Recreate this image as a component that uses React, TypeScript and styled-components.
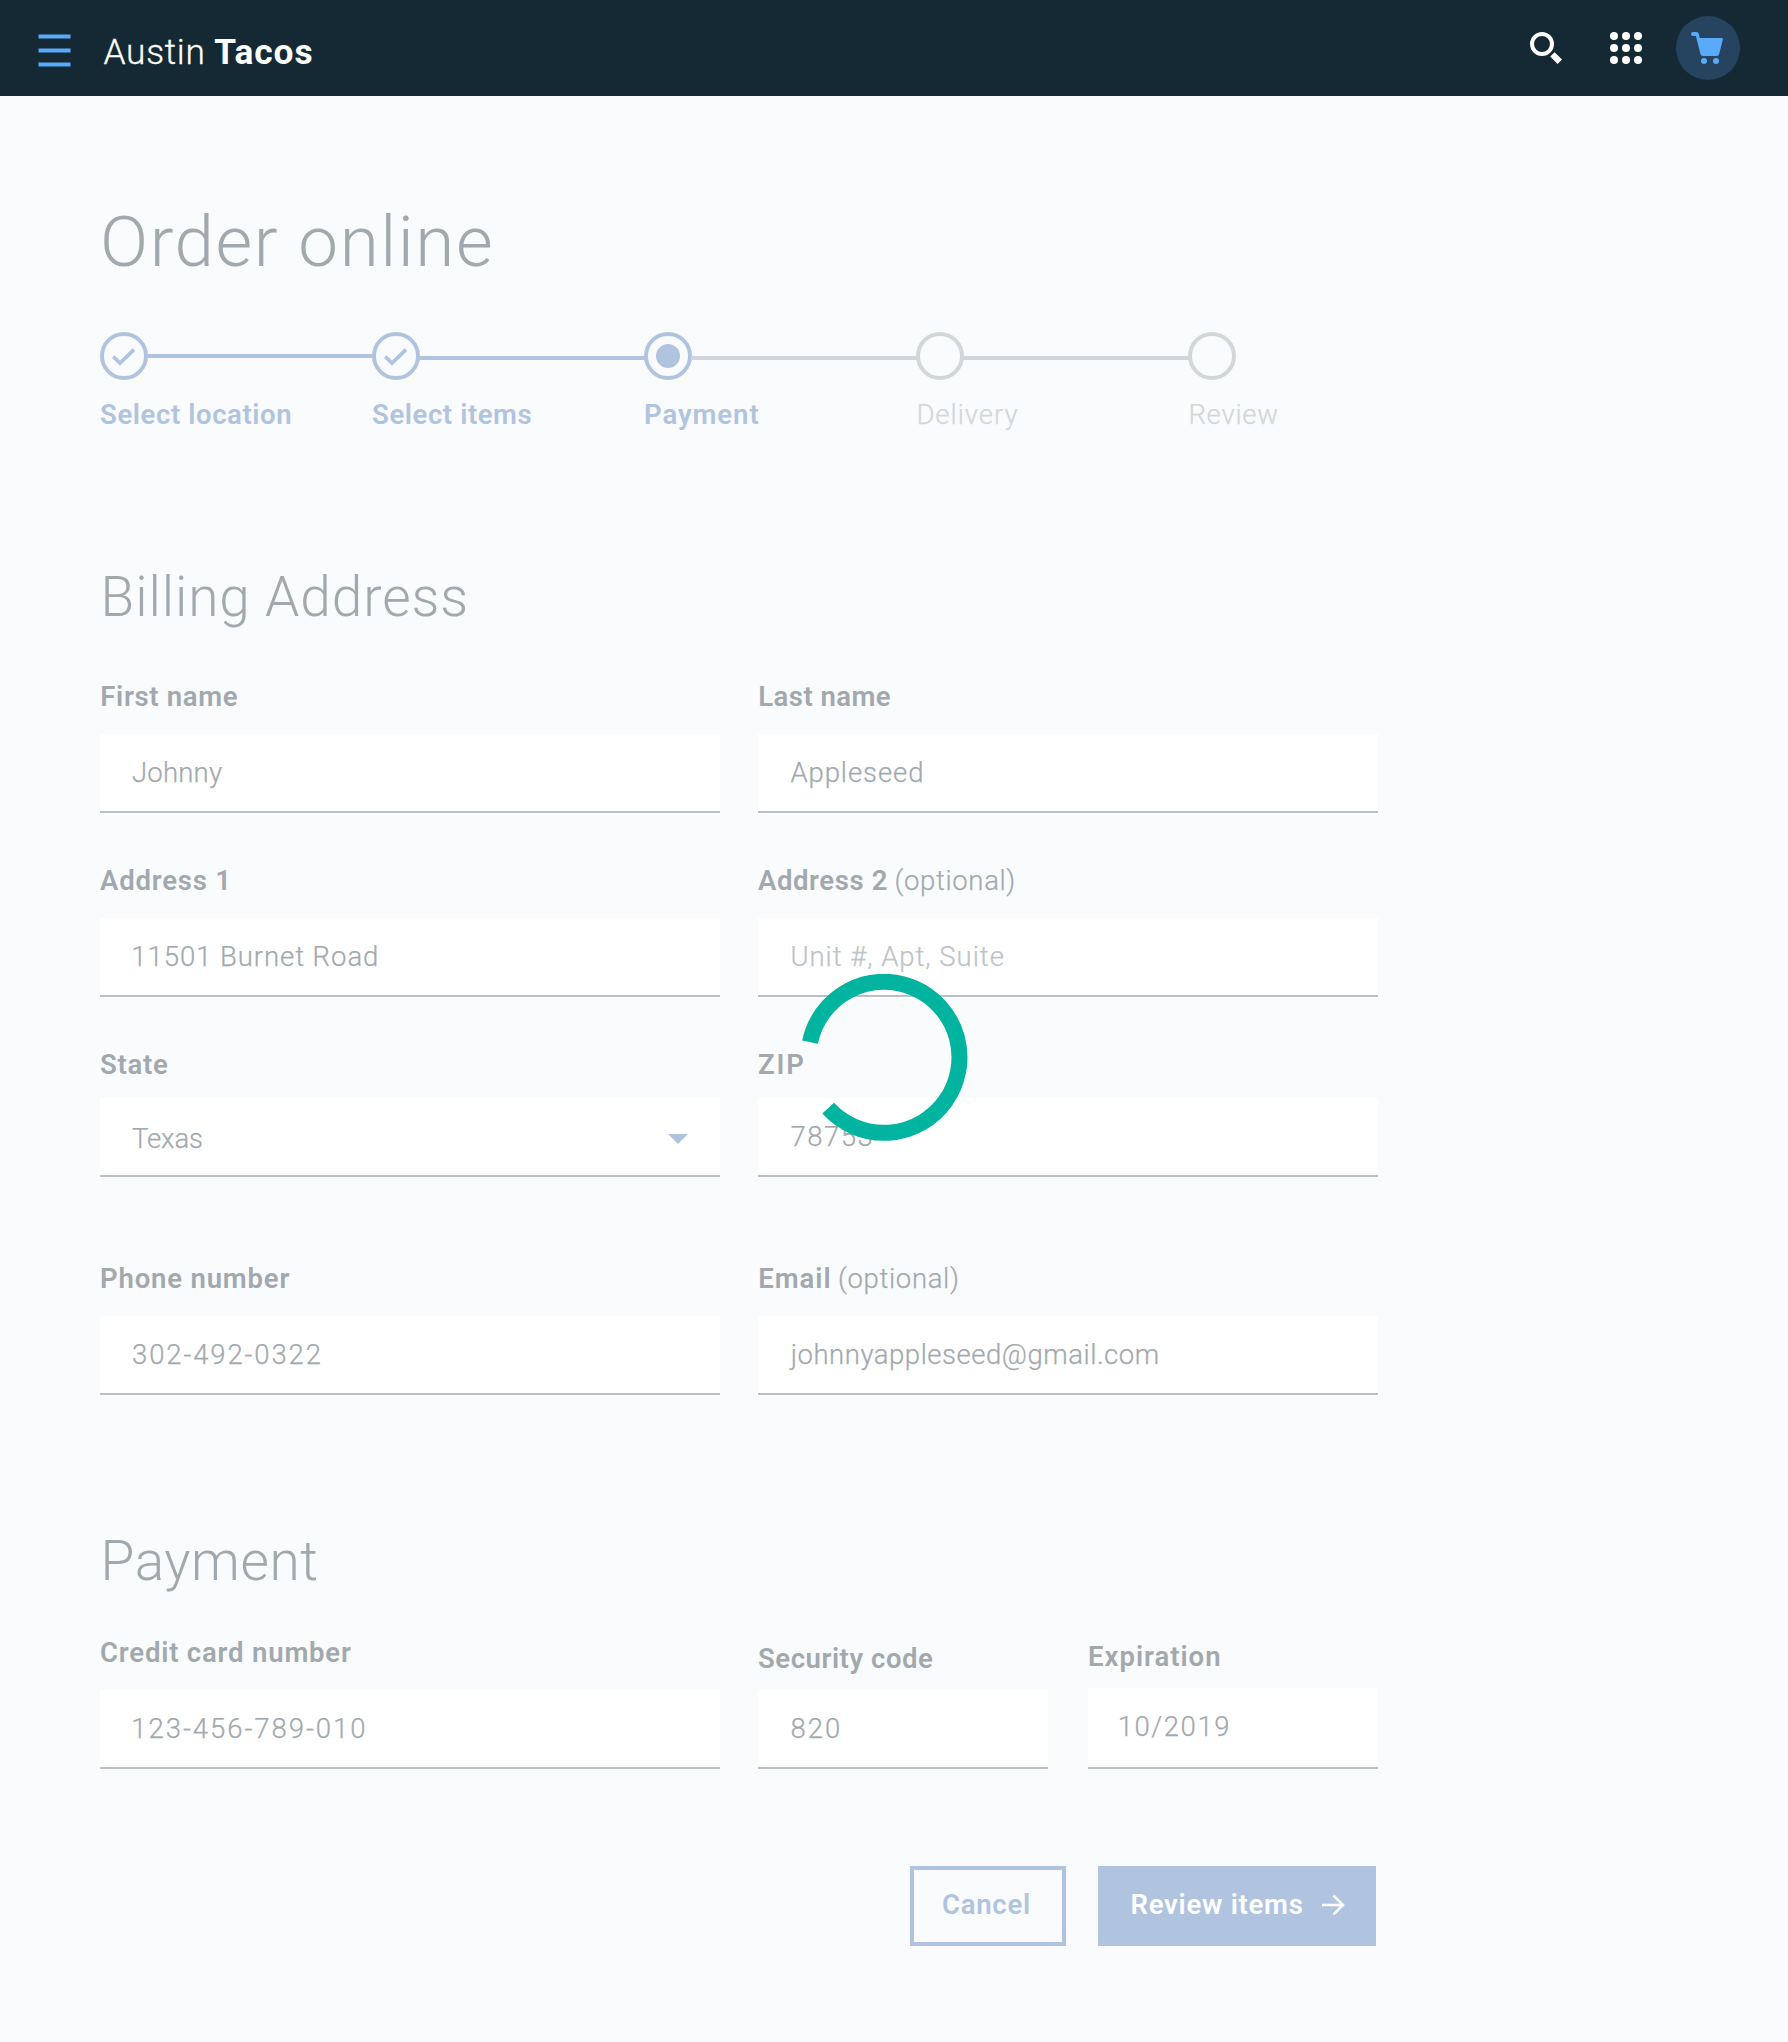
import React from "react";
import styled, { createGlobalStyle } from "styled-components";

const color = {
  header: "#152934",
  page: "#fafbfd",
  ink: "#a1a9ae",
  muted: "#bdc3c7",
  faint: "#d1d7db",
  blue: "#b0c4e0",
  bright: "#5aaafa",
  teal: "#00b4a0",
  rule: "#b9c0c5",
};

const GlobalStyle = createGlobalStyle`
  *, *::before, *::after { box-sizing: border-box; }
  body {
    margin: 0;
    background: ${color.page};
    color: ${color.ink};
    font-family: Roboto, "Noto Sans", "Liberation Sans", sans-serif;
    font-size: 27.5px;
    font-weight: 300;
    line-height: 35px;
  }
  h1, h2 { margin: 0; font-weight: 300; }
`;

const Page = styled.div`
  position: relative;
  min-height: 2042px;
`;

const Header = styled.header`
  display: flex;
  align-items: center;
  height: 96px;
  padding: 0 48px 0 38px;
  background: ${color.header};
`;

const Burger = styled.svg`
  display: block;
  width: 34px;
  height: 34px;
  margin-top: 5px;
`;

const Brand = styled.div`
  display: flex;
  gap: 8.6px;
  flex: 1;
  margin: 8px 0 0 31.5px;
  color: #fff;
  font-size: 35.3px;
  line-height: 42px;
  letter-spacing: 0.71px;

  span { -webkit-text-stroke: 0.3px; }
  strong { font-weight: 700; letter-spacing: 0.95px; }
`;

const Actions = styled.nav`
  display: flex;
  align-items: center;

  svg { display: block; }
`;

const SearchSlot = styled.div`
  width: 80px;
`;

const AppsSlot = styled.div`
  width: 66px;
`;

const CartBadge = styled.div`
  display: flex;
  align-items: center;
  justify-content: center;
  width: 64px;
  height: 64px;
  border-radius: 50%;
  background: #264360;
`;

const Main = styled.main`
  width: 1378px;
  padding: 104px 0 0 100px;
`;

const PageTitle = styled.h1`
  font-size: 71px;
  line-height: 83px;
  letter-spacing: 1.59px;
`;

const Steps = styled.ol`
  display: grid;
  grid-template-columns: repeat(5, 272px);
  margin: 49px 0 0;
  padding: 0;
  list-style: none;
`;

const StepTrack = styled.div`
  display: flex;
  align-items: flex-start;
  height: 48px;
`;

const Marker = styled.div<{ $active: boolean }>`
  display: flex;
  align-items: center;
  justify-content: center;
  flex: none;
  width: 48px;
  height: 48px;
  border: 4px solid ${(p) => (p.$active ? color.blue : color.faint)};
  border-radius: 50%;
`;

const Dot = styled.span`
  width: 24px;
  height: 24px;
  border-radius: 50%;
  background: ${color.blue};
`;

const Connector = styled.span<{ $active: boolean; $drop: number }>`
  flex: 1;
  height: 4px;
  margin: ${(p) => p.$drop}px -1px 0;
  background: ${(p) => (p.$active ? color.blue : color.faint)};
`;

const StepLabel = styled.div<{ $active: boolean; $track: number; $inset: number }>`
  margin-top: 17px;
  padding-left: ${(p) => p.$inset}px;
  color: ${(p) => (p.$active ? color.blue : color.faint)};
  font-weight: ${(p) => (p.$active ? 600 : 300)};
  letter-spacing: ${(p) => p.$track}px;
  -webkit-text-stroke: ${(p) => (p.$active ? 0 : 0.25)}px;
`;

const SectionTitle = styled.h2<{ $top: number; $track: number }>`
  margin-top: ${(p) => p.$top}px;
  padding-left: 0.5px;
  font-size: 55px;
  line-height: 64px;
  letter-spacing: ${(p) => p.$track}px;
`;

const FieldRow = styled.div<{ $top: number }>`
  display: grid;
  grid-template-columns: 620px 620px;
  column-gap: 38px;
  align-items: end;
  margin-top: ${(p) => p.$top}px;
`;

const PaymentRow = styled.div`
  display: grid;
  grid-template-columns: 620px 290px 290px;
  column-gap: 38px;
  align-items: end;
  margin-top: 42px;

  & > :last-child { margin-left: 2px; margin-right: -2px; }
`;

const Label = styled.div<{ $inset: number }>`
  display: flex;
  padding-left: ${(p) => p.$inset}px;
`;

const LabelName = styled.span<{ $track: number }>`
  font-weight: 600;
  letter-spacing: ${(p) => p.$track}px;
`;

const Optional = styled.span`
  margin-left: 6.6px;
  letter-spacing: 0.65px;
  -webkit-text-stroke: 0.25px;
`;

const Control = styled.div<{ $gap: number; $height: number; $drop: number; $inset: number }>`
  display: flex;
  flex-direction: column;
  justify-content: space-between;
  height: ${(p) => p.$height}px;
  margin-top: ${(p) => p.$gap}px;
  padding-bottom: 1px;
  background: #fff;

  & > div {
    display: flex;
    justify-content: space-between;
    padding: ${(p) => p.$drop}px 32px 0 ${(p) => p.$inset}px;
  }

  &::after {
    content: "";
    height: 2px;
    background: ${color.rule};
  }
`;

const Value = styled.span<{ $track: number; $muted?: boolean }>`
  color: ${(p) => (p.$muted ? color.muted : color.ink)};
  letter-spacing: ${(p) => p.$track}px;
  -webkit-text-stroke: 0.25px;
`;

const Caret = styled.svg`
  display: block;
  margin-top: 13px;
`;

const ButtonRow = styled.div`
  display: flex;
  justify-content: flex-end;
  gap: 32px;
  margin: 96px 2px 0 0;
`;

const Button = styled.button<{ $primary?: boolean; $width: number }>`
  display: flex;
  align-items: flex-start;
  width: ${(p) => p.$width}px;
  height: 80px;
  padding: 17px 0 0 ${(p) => (p.$primary ? 28.5 : 28)}px;
  border: 4px solid ${color.blue};
  border-radius: 0;
  background: ${(p) => (p.$primary ? color.blue : "transparent")};
  color: ${(p) => (p.$primary ? "#fff" : color.blue)};
  font-family: inherit;
  font-size: 27.5px;
  font-weight: 600;
  line-height: 35px;
  letter-spacing: ${(p) => (p.$primary ? 0.74 : 0.75)}px;
  white-space: nowrap;

  svg { display: block; margin: 6px 0 0 17px; }
`;

const Spinner = styled.svg`
  position: absolute;
  left: 800px;
  top: 974px;
`;

type FieldProps = {
  label: string;
  labelTrack: number;
  labelInset?: number;
  optional?: boolean;
  value: string;
  track: number;
  muted?: boolean;
  inset?: number;
  gap?: number;
  drop?: number;
  height?: number;
  select?: boolean;
};

function Field({
  label, labelTrack, labelInset = 0.3, optional, value, track, muted,
  inset = 32, gap = 20, drop = 21, height = 80, select,
}: FieldProps) {
  return (
    <div>
      <Label $inset={labelInset}>
        <LabelName $track={labelTrack}>{label}</LabelName>
        {optional && <Optional>(optional)</Optional>}
      </Label>
      <Control $gap={gap} $height={height} $drop={drop} $inset={inset}>
        <div>
          <Value $track={track} $muted={muted}>{value}</Value>
          {select && (
            <Caret width="20" height="10" viewBox="0 0 20 10">
              <path d="M0 0h20L10 10z" fill={color.blue} />
            </Caret>
          )}
        </div>
      </Control>
    </div>
  );
}

const steps = [
  { label: "Select location", state: "done", track: 0.61, inset: 0, drop: 22 },
  { label: "Select items", state: "done", track: 0.6, inset: 0, drop: 24 },
  { label: "Payment", state: "current", track: 0.94, inset: 0, drop: 24 },
  { label: "Delivery", state: "todo", track: 0.95, inset: 0.4, drop: 24 },
  { label: "Review", state: "todo", track: 0.75, inset: 0.4, drop: 24 },
];

export default function App() {
  return (
    <Page>
      <GlobalStyle />
      <Header>
        <Burger viewBox="0 0 34 34" fill={color.bright}>
          <path d="M.5.5h32v4h-32zM.5 14.5h32v4h-32zM.5 28.5h32v4h-32z" />
        </Burger>
        <Brand>
          <span>Austin</span>
          <strong>Tacos</strong>
        </Brand>
        <Actions>
          <SearchSlot>
            <svg width="32" height="32" viewBox="0 0 32 32">
              <circle cx="12" cy="12" r="10" fill="none" stroke="#fff" strokeWidth="4" />
              <path d="M24.6 20.2l7.4 7.4-4.4 4.4-7.4-7.4z" fill="#fff" />
            </svg>
          </SearchSlot>
          <AppsSlot>
            <svg width="32" height="32" viewBox="0 0 32 32" fill="#fff">
              {[4, 16, 28].map((y) =>
                [4, 16, 28].map((x) => <circle key={`${x}-${y}`} cx={x} cy={y} r="4" />),
              )}
            </svg>
          </AppsSlot>
          <CartBadge>
            <svg width="34" height="32" viewBox="0 0 34 32" fill={color.bright}>
              <path d="M2 0h3.5q2 0 2.4 1.9L8.7 6H30.6q1.7 0 1.3 1.6L28 22.6q-.4 1.4-1.9 1.4H11.5q-1.5 0-1.9-1.4L4.9 4H2A2 2 0 0 1 2 0z" />
              <circle cx="13" cy="29" r="3" />
              <circle cx="25" cy="29" r="3" />
            </svg>
          </CartBadge>
        </Actions>
      </Header>

      <Main>
        <PageTitle>Order online</PageTitle>
        <Steps>
          {steps.map((s, i) => (
            <li key={s.label}>
              <StepTrack>
                <Marker $active={s.state !== "todo"}>
                  {s.state === "done" && (
                    <svg width="40" height="40" viewBox="4 4 40 40">
                      <path d="M13.3 24.6L20 31.1L34 17.6" fill="none" stroke={color.blue} strokeWidth="3.7" />
                    </svg>
                  )}
                  {s.state === "current" && <Dot />}
                </Marker>
                {i < steps.length - 1 && <Connector $active={i < 2} $drop={s.drop} />}
              </StepTrack>
              <StepLabel $active={s.state !== "todo"} $track={s.track} $inset={s.inset}>
                {s.label}
              </StepLabel>
            </li>
          ))}
        </Steps>

        <SectionTitle $top={133} $track={0.9}>Billing Address</SectionTitle>
        <FieldRow $top={50}>
          <Field label="First name" labelTrack={0.67} value="Johnny" track={0.2} />
          <Field label="Last name" labelTrack={0.45} value="Appleseed" track={0.92} inset={32.4} />
        </FieldRow>
        <FieldRow $top={49}>
          <Field label="Address 1" labelTrack={0.8} labelInset={0} value="11501 Burnet Road" track={0.94} inset={31.3} />
          <Field label="Address 2" labelTrack={0.6} labelInset={0} optional value="Unit #, Apt, Suite" track={0.98} muted inset={32.4} />
        </FieldRow>
        <FieldRow $top={49}>
          <Field label="State" labelTrack={0.75} labelInset={0} value="Texas" track={-0.1} gap={16} drop={23} select />
          <Field label="ZIP" labelTrack={1.9} labelInset={0} value="78753" track={1.5} gap={16} inset={32.4} />
        </FieldRow>
        <FieldRow $top={83}>
          <Field label="Phone number" labelTrack={0.82} labelInset={0} value="302-492-0322" track={1.88} />
          <Field label="Email" labelTrack={0.95} optional value="johnnyappleseed@gmail.com" track={0.53} inset={32.7} />
        </FieldRow>

        <SectionTitle $top={133} $track={0.6}>Payment</SectionTitle>
        <PaymentRow>
          <Field label="Credit card number" labelTrack={0.82} labelInset={0} value="123-456-789-010" track={1.96} inset={31.3} />
          <Field label="Security code" labelTrack={0.55} labelInset={0} value="820" track={2} gap={14} inset={32.4} />
          <Field label="Expiration" labelTrack={1} labelInset={0} value="10/2019" track={1.55} inset={29.7} gap={14} height={82} />
        </PaymentRow>

        <ButtonRow>
          <Button $width={156}>Cancel</Button>
          <Button $primary $width={278}>
            Review items
            <svg width="24" height="24" viewBox="0 0 24 24" fill="none" stroke="#fff" strokeWidth="2.6">
              <path d="M1 12H22M12.5 2.6L22 12L12.5 21.4" />
            </svg>
          </Button>
        </ButtonRow>
      </Main>

      <Spinner width="168" height="168" viewBox="0 0 168 168">
        <path
          d="M10 68.2A75.5 75.5 0 1 1 28.2 134.200"
          fill="none"
          stroke={color.teal}
          strokeWidth="16"
        />
      </Spinner>
    </Page>
  );
}
